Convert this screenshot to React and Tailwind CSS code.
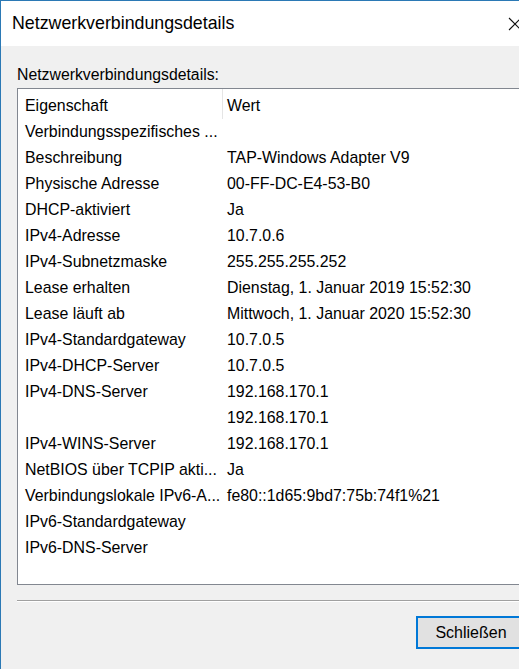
const rows = [
  ["Verbindungsspezifisches ...", ""],
  ["Beschreibung", "TAP-Windows Adapter V9"],
  ["Physische Adresse", "00-FF-DC-E4-53-B0"],
  ["DHCP-aktiviert", "Ja"],
  ["IPv4-Adresse", "10.7.0.6"],
  ["IPv4-Subnetzmaske", "255.255.255.252"],
  ["Lease erhalten", "Dienstag, 1. Januar 2019 15:52:30"],
  ["Lease läuft ab", "Mittwoch, 1. Januar 2020 15:52:30"],
  ["IPv4-Standardgateway", "10.7.0.5"],
  ["IPv4-DHCP-Server", "10.7.0.5"],
  ["IPv4-DNS-Server", "192.168.170.1"],
  ["", "192.168.170.1"],
  ["IPv4-WINS-Server", "192.168.170.1"],
  ["NetBIOS über TCPIP akti...", "Ja"],
  ["Verbindungslokale IPv6-A...", "fe80::1d65:9bd7:75b:74f1%21"],
  ["IPv6-Standardgateway", ""],
  ["IPv6-DNS-Server", ""],
];

export default function App() {
  return (
    <div
      className="h-[669px] w-[519px] overflow-hidden bg-[#f0f0f0] text-black"
      style={{ fontFamily: '"Liberation Sans", Arial, sans-serif' }}
    >
      <div className="flex h-[669px] w-[560px] flex-col border-l border-t border-[#2b79b5]">
        {/* title bar */}
        <div className="flex h-[45px] shrink-0 items-center justify-between bg-white pl-[11px] pr-[40px]">
          <span className="text-[17.8px] leading-none">Netzwerkverbindungsdetails</span>
          <svg width="14" height="14" viewBox="0 0 14 14" className="mr-[-2px]">
            <path d="M1 1 L13 13 M13 1 L1 13" stroke="#111" strokeWidth="1.1" />
          </svg>
        </div>

        <div className="flex flex-1 flex-col px-[16px]">
          <div className="pt-[19px] text-[15.8px] leading-[20px]">Netzwerkverbindungsdetails:</div>

          <div className="mt-[3px] h-[497px] border border-[#828790] bg-white text-[15.9px]">
            <div className="flex h-[30px] items-end leading-[20px]">
              <div className="flex w-[204px] items-center pb-[3px] pl-[7px]">Eigenschaft</div>
              <div className="h-[30px] w-px bg-[#e5e5e5]" />
              <div className="pb-[3px] pl-[4px]">Wert</div>
            </div>
            {rows.map(([k, v], i) => (
              <div key={i} className="flex h-[26px] items-center leading-[20px]">
                <div className="w-[205px] whitespace-nowrap pl-[7px]">{k}</div>
                <div className="whitespace-nowrap pl-[4px]">{v}</div>
              </div>
            ))}
          </div>

          <div className="mt-[15px] h-[2px] border-t border-[#a0a0a0] border-b border-b-white" />

          <div className="flex pt-[14px]">
            <div className="ml-[399px] flex h-[33px] w-[110px] items-center justify-center border-2 border-[#0078d7] bg-[#e1e1e1] text-[16px]">
              Schließen
            </div>
          </div>
        </div>
      </div>
    </div>
  );
}
